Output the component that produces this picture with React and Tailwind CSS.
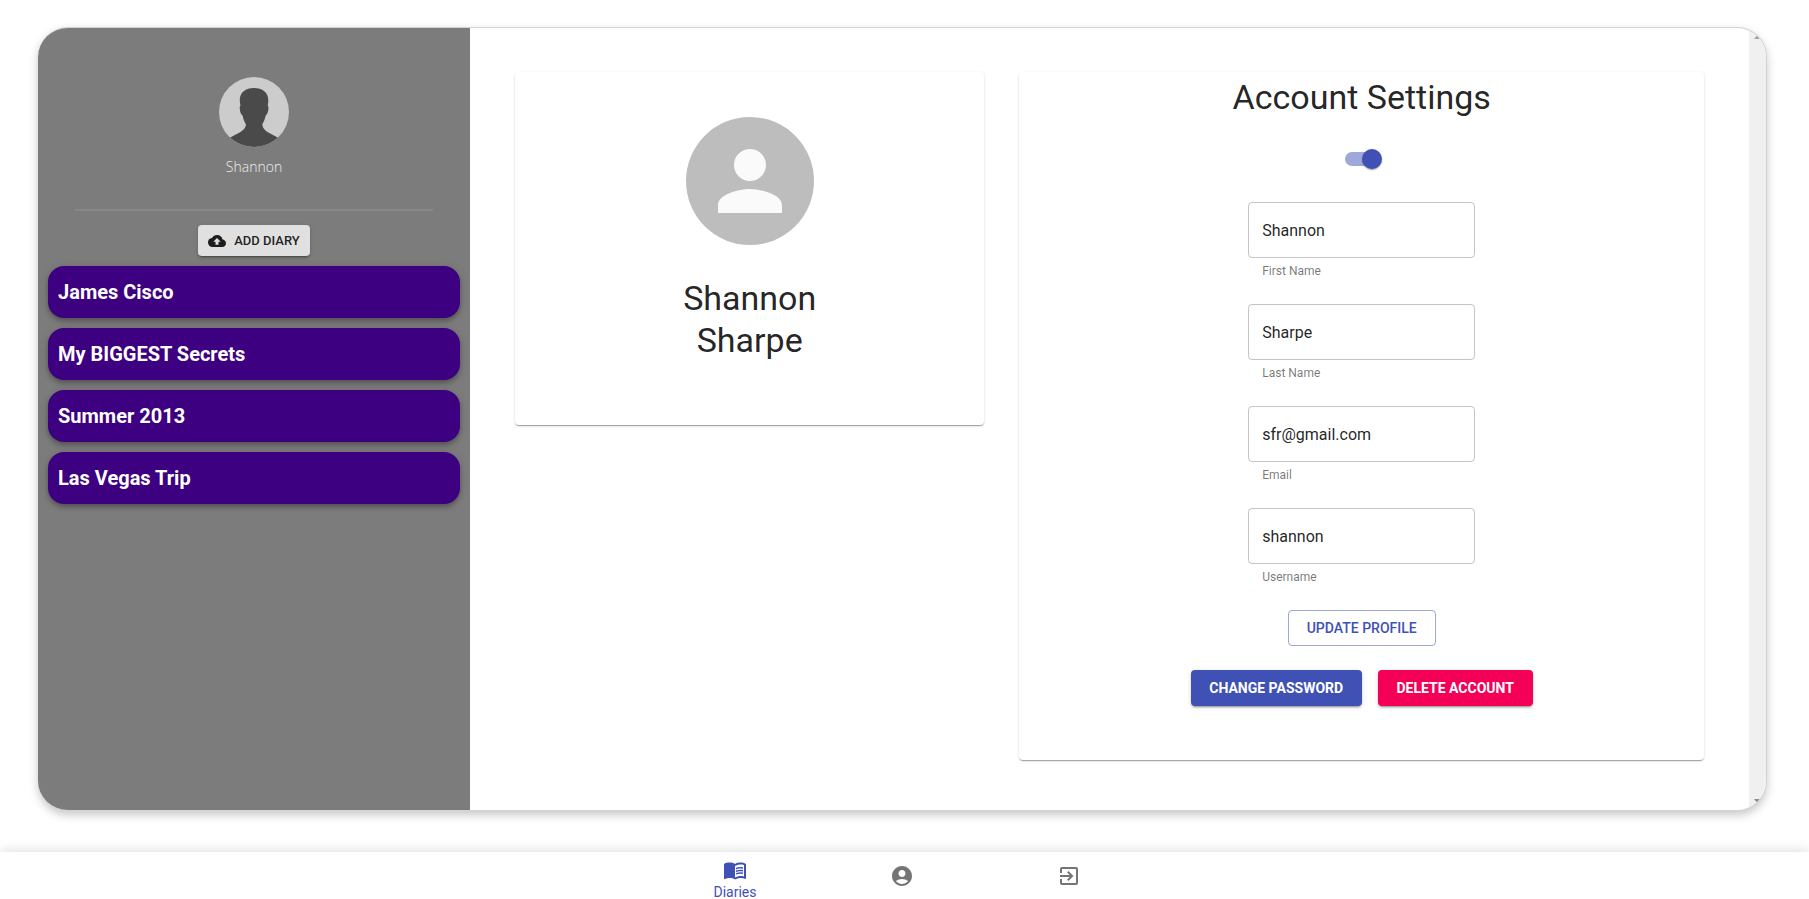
import { MdCloudUpload, MdPerson, MdMenuBook, MdAccountCircle, MdExitToApp } from "react-icons/md";

const diaries = ["James Cisco", "My BIGGEST Secrets", "Summer 2013", "Las Vegas Trip"];

const fields = [
  { id: "first-name", label: "First Name", value: "Shannon", type: "text" },
  { id: "last-name", label: "Last Name", value: "Sharpe", type: "text" },
  { id: "email", label: "Email", value: "sfr@gmail.com", type: "text" },
  { id: "username", label: "Username", value: "shannon", type: "text" },
];

function Silhouette() {
  return (
    <svg viewBox="0 0 70 70" className="size-[70px] rounded-full" aria-hidden="true">
      <rect width="70" height="70" fill="#cccccc" />
      <path
        fill="#4a4a4a"
        d="M35 11c8.500 0 14.500 4.500 14.300 12.500 0 2.200-.5 4-.5 5.500.9.500.8 2.500.4 4.500-.4 2.500-1.500 4.200-2.600 5.200-.6 3.300-1.800 6-3.200 8.300-.3 3.500 2.500 6.500 6 8.500 3 1.700 6 3 9.600 5.300L58 72H12l-1-11.200c3.500-2.300 6.500-3.600 9.600-5.300 3.500-2 6.700-5 6.200-8.500-1.400-2.300-2.600-5-3.200-8.300-1.100-1-2.300-2.700-2.600-5.200-.4-2-.4-4 .4-4.500 0-1.500-.6-3.300-.6-5.500C20.600 15.500 26.500 11 35 11z"
      />
    </svg>
  );
}

function Sidebar() {
  return (
    <aside className="flex w-1/4 shrink-0 flex-col items-center bg-[#7c7c7c] px-[10px] pt-[49px]">
      <Silhouette />
      <p className="mt-2 font-['Open_Sans',sans-serif] text-sm leading-6 font-light text-[#eeeeee]">Shannon</p>
      <hr className="mt-[30px] mb-[14px] h-[2px] w-[87%] border-0 bg-[#878787]" />
      <button
        type="button"
        className="flex h-[31px] w-28 items-center justify-center gap-2 rounded bg-[#e0e0e0] text-[13px] font-medium text-black/87 shadow-[0_3px_1px_-2px_rgba(0,0,0,0.2),0_2px_2px_0_rgba(0,0,0,0.14),0_1px_5px_0_rgba(0,0,0,0.12)]"
      >
        <MdCloudUpload size={18} />
        ADD DIARY
      </button>
      <ul className="mt-[10px] flex w-full flex-col gap-[10px]">
        {diaries.map((name) => (
          <li
            key={name}
            className="flex h-[52px] items-center rounded-2xl bg-[#3c0080] px-[10px] text-xl font-bold text-white shadow-[0_2px_4px_-1px_rgba(0,0,0,0.2),0_4px_5px_0_rgba(0,0,0,0.14),0_1px_10px_0_rgba(0,0,0,0.12)]"
          >
            {name}
          </li>
        ))}
      </ul>
    </aside>
  );
}

function Card({ className, children }) {
  return (
    <section
      className={
        "flex flex-col items-center rounded bg-white shadow-[0_2px_1px_-1px_rgba(0,0,0,0.2),0_1px_1px_0_rgba(0,0,0,0.14),0_1px_3px_0_rgba(0,0,0,0.12)] " +
        className
      }
    >
      {children}
    </section>
  );
}

function ProfileCard() {
  return (
    <Card className="flex-[469] pt-[45px] pb-16">
      <div className="flex size-32 items-center justify-center rounded-full bg-[#bdbdbd] text-[#fafafa]">
        <MdPerson size={96} />
      </div>
      <h2 className="mt-8 w-min text-center text-[34px] leading-[42px]">Shannon Sharpe</h2>
    </Card>
  );
}

function Field({ id, label, value, type }) {
  return (
    <div className="w-[227px]">
      <input
        id={id}
        type={type}
        defaultValue={value}
        className="h-14 w-full rounded border border-black/23 px-[13px] text-base text-black/87 outline-none focus:border-[#3f51b5]"
      />
      <label htmlFor={id} className="mt-[3px] block px-[14px] text-xs leading-5 text-black/54">
        {label}
      </label>
    </div>
  );
}

function SettingsCard() {
  return (
    <Card className="flex-[684] pt-1 pb-[54px]">
      <h1 className="text-center text-[34px] leading-[42px]">Account Settings</h1>
      <label className="relative mt-[31px] flex h-5 w-[34px] cursor-pointer items-center">
        <input
          type="checkbox"
          defaultChecked
          aria-label="Edit profile"
          className="peer absolute inset-0 z-10 cursor-pointer opacity-0"
        />
        <span className="h-[14px] w-[34px] rounded-full bg-black/38 peer-checked:bg-[#9fa8da]" />
        <span className="absolute left-0 size-5 rounded-full bg-[#fafafa] shadow-[0_2px_1px_-1px_rgba(0,0,0,0.2),0_1px_1px_0_rgba(0,0,0,0.14),0_1px_3px_0_rgba(0,0,0,0.12)] peer-checked:left-[17px] peer-checked:bg-[#3f51b5]" />
      </label>
      <form className="mt-[33px] flex flex-col items-center gap-[23px]" onSubmit={(e) => e.preventDefault()}>
        {fields.map((f) => (
          <Field key={f.id} {...f} />
        ))}
        <button type="submit" className="h-9 w-[148px] rounded border border-[#3f51b5]/50 text-sm font-medium text-[#3f51b5]">
          UPDATE PROFILE
        </button>
      </form>
      <div className="mt-6 flex gap-4">
        <button
          type="button"
          className="h-9 w-[171px] rounded bg-[#3f51b5] text-sm font-bold text-white shadow-[0_3px_1px_-2px_rgba(0,0,0,0.2),0_2px_2px_0_rgba(0,0,0,0.14),0_1px_5px_0_rgba(0,0,0,0.12)]"
        >
          CHANGE PASSWORD
        </button>
        <button
          type="button"
          className="h-9 w-[155px] rounded bg-[#f50057] text-sm font-bold text-white shadow-[0_3px_1px_-2px_rgba(0,0,0,0.2),0_2px_2px_0_rgba(0,0,0,0.14),0_1px_5px_0_rgba(0,0,0,0.12)]"
        >
          DELETE ACCOUNT
        </button>
      </div>
    </Card>
  );
}

function ScrollTrack() {
  return (
    <div className="flex w-[17px] shrink-0 flex-col items-center justify-between bg-[#f0f0f0] py-[7px]" aria-hidden="true">
      <svg viewBox="0 0 7 4" className="h-1 w-[7px]" fill="#a3a3a3">
        <path d="M0 4 3.500 0 7 4z" />
      </svg>
      <svg viewBox="0 0 7 4" className="h-1 w-[7px]" fill="#8a8a8a">
        <path d="M0 0h7L3.500 4z" />
      </svg>
    </div>
  );
}

function BottomNav() {
  return (
    <nav className="relative flex h-14 shrink-0 justify-center bg-white pr-[5px] shadow-[0_-2px_10px_0_rgba(0,0,0,0.12)]">
      <a href="#diaries" className="flex w-[167px] flex-col items-center pt-[6px] text-sm leading-5 text-[#3f51b5]">
        <MdMenuBook size={24} />
        Diaries
      </a>
      <a href="#profile" aria-label="Profile" className="flex w-[167px] justify-center pt-3 text-black/54">
        <MdAccountCircle size={24} />
      </a>
      <a href="#logout" aria-label="Log out" className="flex w-[167px] justify-center pt-3 text-black/54">
        <MdExitToApp size={24} />
      </a>
    </nav>
  );
}

export default function App() {
  return (
    <div className="flex h-screen flex-col overflow-hidden bg-white font-['Roboto',sans-serif] text-black/87">
      <main className="mt-[27px] mr-[42px] mb-[41px] ml-[38px] flex shrink-0 overflow-hidden rounded-[30px] border-y border-r border-[#d3d3d3] bg-white shadow-[0_4px_10px_0_rgba(0,0,0,0.22)]">
        <Sidebar />
        <div className="flex flex-1 items-start gap-[35px] px-[45px] pt-11 pb-[50px]">
          <ProfileCard />
          <SettingsCard />
        </div>
        <ScrollTrack />
      </main>
      <BottomNav />
    </div>
  );
}
